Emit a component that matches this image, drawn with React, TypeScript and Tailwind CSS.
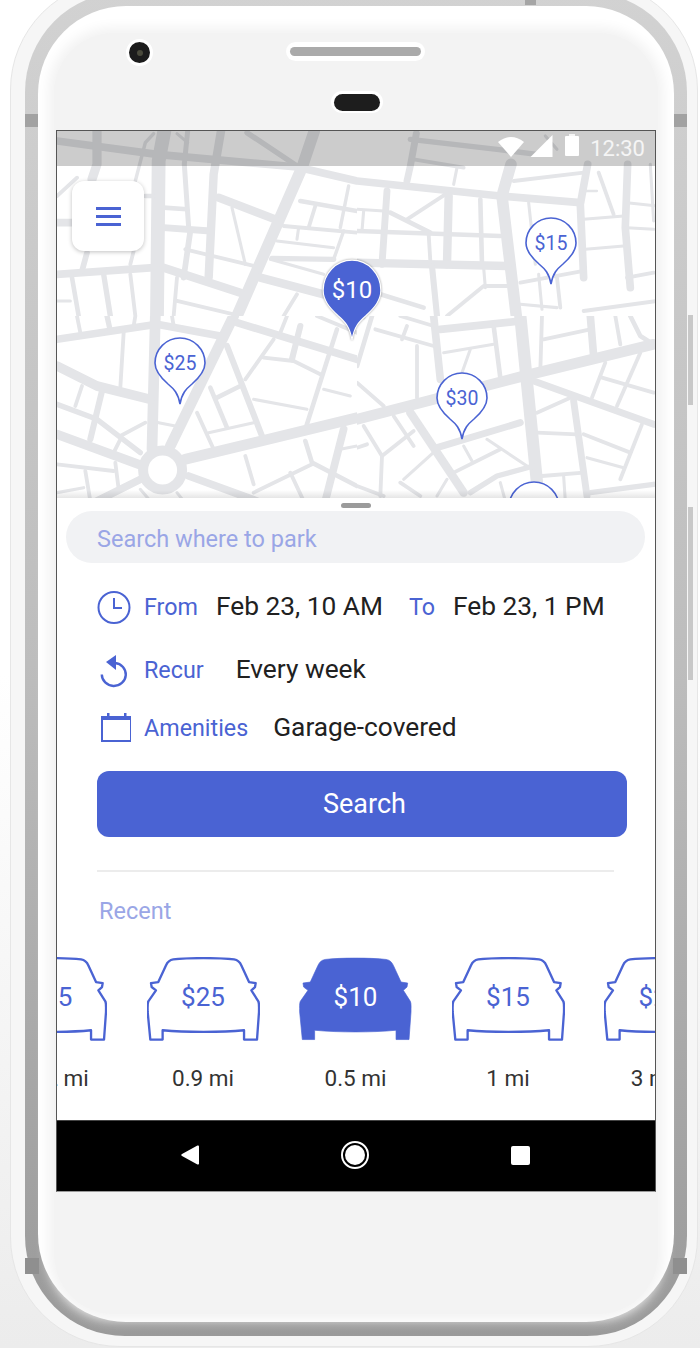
const BLUE = '#4a63d3'
const ROAD = '#e4e5e8'

// road traces, each group is drawn in its own crop of the map at 3x
type Road = [string, number]

const topLeft: Road[] = [
  ['0,30 300,70 720,108 900,150', 20], ['120,0 120,100 105,145', 24], ['322,0 305,90 300,555', 36],
  ['392,0 382,100 395,290', 13], ['492,0 470,130 455,440', 22], ['772,0 735,110 540,555', 30],
  ['570,5 720,105', 14], ['485,200 655,265', 22], ['525,230 565,400', 8], ['730,210 900,240', 12],
  ['775,225 755,290', 10], ['725,290 720,325', 8], ['680,285 900,305', 10], ['660,330 830,350', 8],
  ['645,382 830,385', 14], ['875,165 850,290', 9], ['860,300 830,385', 9], ['0,275 50,275', 20],
  ['320,230 390,235', 12], ['320,290 460,300', 18], ['400,300 380,440', 15], ['385,355 590,405', 10],
  ['320,410 550,485', 22], ['0,430 290,410', 20], ['90,365 75,420', 15], ['230,360 220,400', 10],
  ['45,440 65,555', 12], ['140,430 160,555', 14], ['220,430 235,555', 10], ['360,440 350,555', 10],
  ['360,510 530,550', 10], ['610,440 800,490', 22], ['640,385 800,430', 8], ['720,490 680,555', 10],
  ['0,195 60,140', 10], ['290,8 265,35 235,150', 9], ['265,195 290,195', 12], ['360,8 392,35', 8],
  ['0,510 40,510', 8],
]

const topRight: Road[] = [
  ['0,150 430,195 670,215', 20], ['160,25 420,55 540,70', 14], ['170,85 320,110', 10],
  ['470,150 680,125', 10], ['462,100 435,195 478,555', 30], ['178,8 160,105 150,150', 18],
  ['300,110 290,160', 8], ['90,180 75,400', 18], ['275,195 270,400', 22], ['370,205 375,400', 12],
  ['100,245 220,305', 12], ['150,265 265,190', 10], ['0,300 430,315', 12], ['0,235 80,240', 8],
  ['20,240 15,300', 8], ['215,310 220,390', 10], ['0,395 450,405', 22], ['225,405 240,555', 16],
  ['380,410 385,470', 8], ['270,555 380,465 450,465', 10], ['515,215 535,400', 8],
  ['692,100 670,220 680,440', 20], ['490,455 680,420', 10], ['600,440 610,530', 10],
  ['545,430 555,535', 8], ['680,265 800,255', 8], ['685,355 800,345', 8], ['725,125 770,250', 10],
  ['812,100 805,290 820,470', 20], ['810,215 900,225', 8], ['810,290 890,295', 8],
  ['810,440 890,425', 10], ['680,180 720,180', 6], ['680,540 900,510', 10], ['490,520 600,530', 8],
  ['70,490 200,530', 12], ['565,15 600,55', 8], ['880,100 890,270', 8],
]

const bottomLeft: Road[] = [
  ['295,0 285,400', 28], ['530,0 340,390', 28], ['0,70 200,40 300,25 490,60', 20],
  ['540,20 900,130', 20], ['0,150 120,210 280,250', 25], ['200,50 190,215', 10], ['75,210 55,270', 10],
  ['135,225 100,370', 16], ['0,265 120,310 250,410', 14], ['510,90 615,360', 16], ['460,215 510,335', 12],
  ['480,245 550,210', 12], ['650,70 565,190', 10], ['620,125 710,135 790,175', 10], ['730,30 705,130', 16],
  ['840,40 745,340', 12], ['590,250 750,280', 8], ['800,220 880,240', 8], ['455,350 590,320', 8],
  ['420,290 470,400', 10], ['385,430 900,305', 28], ['190,360 265,320', 10], ['305,320 355,330', 8],
  ['190,370 170,410', 10], ['0,355 245,445', 24], ['0,445 170,465', 10], ['85,465 100,555', 10],
  ['175,440 185,520', 10], ['0,530 80,515', 8], ['120,555 250,490', 20], ['395,480 600,555', 20],
  ['565,420 590,505', 10], ['745,375 765,440 900,510', 12], ['765,445 590,530', 10], ['700,470 740,555', 10],
  ['860,340 805,555', 20], ['850,400 900,390', 8], ['250,520 280,555', 8], ['360,530 380,555', 8],
  ['60,0 70,50', 10], ['150,0 160,45', 14], ['235,0 230,30', 10], ['345,0 350,30', 10], ['690,0 670,50', 10],
  ['780,0 900,50', 10],
]

const bottomRight: Road[] = [
  ['0,310 230,250 500,180 890,85', 28], ['490,0 540,500', 32], ['230,0 250,190', 20],
  ['250,40 490,15', 20], ['45,0 0,150', 12], ['55,40 230,90', 10], ['150,30 135,70', 10],
  ['180,90 180,245', 10], ['0,200 80,270', 10], ['410,30 430,185', 12], ['260,110 410,85', 8],
  ['340,100 315,170', 8], ['555,0 550,165', 10], ['560,70 700,40', 10], ['700,0 710,120', 20],
  ['775,0 790,85', 10], ['820,0 850,60 890,85', 12], ['530,195 890,325', 18], ['540,290 640,245', 10],
  ['650,255 690,540', 18], ['745,140 705,245', 10], ['850,110 780,270', 10], ['735,185 890,230', 10],
  ['680,355 820,410', 10], ['855,325 790,490', 10], ['690,425 800,455', 8], ['540,350 660,355', 10],
  ['555,480 680,470', 10], ['160,290 320,530', 22], ['110,300 170,390', 10], ['0,395 30,385', 10],
  ['20,330 75,420 70,540', 10], ['75,420 170,345', 10], ['240,395 490,320', 18], ['320,390 345,435', 8],
  ['290,470 430,400', 10], ['390,370 510,450', 8], ['140,490 240,400', 8], ['340,530 420,480 530,450', 14],
  ['0,510 80,540', 10], ['130,500 190,540', 10], ['620,480 625,555', 8], ['430,500 445,555', 8],
  ['700,530 890,505', 14], ['240,540 270,490', 8], ['0,0 20,5', 10], ['130,0 230,30', 10],
]

function RoadGroup({ id, x, y, roads }: { id: string; x: number; y: number; roads: Road[] }) {
  return (
    <g transform={`translate(${x} ${y}) scale(0.3333)`}>
      <clipPath id={id}>
        <rect x={0} y={0} width={900} height={555} />
      </clipPath>
      <g clipPath={`url(#${id})`} fill="none" stroke={ROAD} strokeLinejoin="round" strokeLinecap="round">
        {roads.map(([points, w], i) => (
          <polyline key={i} points={points} strokeWidth={w * 1.15} />
        ))}
      </g>
    </g>
  )
}

function MapRoads() {
  return (
    <svg className="block w-[598px] h-[367px]" viewBox="57 130 598 367">
      <RoadGroup id="tl" x={57} y={130} roads={topLeft} />
      <RoadGroup id="tr" x={357} y={130} roads={topRight} />
      <RoadGroup id="bl" x={57} y={315} roads={bottomLeft} />
      <RoadGroup id="br" x={357} y={315} roads={bottomRight} />
      {/* roundabout */}
      <circle cx={162.6} cy={469} r={19.5} fill="#fff" stroke={ROAD} strokeWidth={10} />
    </svg>
  )
}

const PIN_PATH =
  'M26 1A25 25 0 0 1 51 26C51 34 46 40 38 47C32 52 28 56 26 67C24 56 20 52 14 47C6 40 1 34 1 26A25 25 0 0 1 26 1Z'

function Pin({ price, left, top }: { price: string; left: string; top: string }) {
  return (
    <div className={`absolute ${left} ${top} w-[52px] h-[68px]`}>
      <svg className="block w-[52px] h-[68px]" viewBox="0 0 52 68">
        <path d={PIN_PATH} fill="#fff" stroke={BLUE} strokeWidth={1.6} />
      </svg>
      <div className="absolute left-0 top-0 w-[52px] h-[53px] flex items-center justify-center text-[19.5px] text-[#4a63d3]">
        {price}
      </div>
    </div>
  )
}

function StatusBar() {
  return (
    <div className="absolute left-0 top-0 w-full h-[35px] bg-black/20 flex items-center justify-end pr-[10px]">
      <svg className="w-[26px] h-[22px] mt-[-4px]" viewBox="0 0 26 22">
        <path d="M0 6Q13 -4 26 6L13 21Z" fill="#fff" />
      </svg>
      <svg className="ml-[6px] w-[23px] h-[23px] mt-[-5px]" viewBox="0 0 23 23">
        <path d="M0.5 22L22.5 0V22Z" fill="#fff" />
      </svg>
      <div className="ml-[12px] w-[14px] h-[20px] mt-[-5px] bg-white rounded-[1px] relative">
        <div className="absolute left-[4px] top-[-2px] w-[6px] h-[2px] bg-white/80" />
      </div>
      <span className="ml-[11px] text-[22px] text-white/80 leading-none">12:30</span>
    </div>
  )
}

function ClockIcon() {
  return (
    <svg className="block w-[34px] h-[33px]" viewBox="0 0 34 33">
      <circle cx={17} cy={16.5} r={15.5} fill="none" stroke={BLUE} strokeWidth={2} />
      <path d="M17 7V17H25" fill="none" stroke={BLUE} strokeWidth={2} />
    </svg>
  )
}

function ReplayIcon() {
  return (
    <svg className="block w-[34px] h-[36px]" viewBox="97 652 34 36">
      <path d="M115 663A12 11.5 0 1 1 101.8 674.5" fill="none" stroke={BLUE} strokeWidth={2.4} />
      <path d="M116 655V670L106 662Z" fill={BLUE} />
    </svg>
  )
}

function CalendarIcon() {
  return (
    <svg className="block w-[34px] h-[32px]" viewBox="97 710 34 32">
      <rect x={102} y={716} width={29} height={23} fill="none" stroke={BLUE} strokeWidth={2} />
      <rect x={101} y={714} width={31} height={4} fill={BLUE} />
      <rect x={107} y={711} width={2.5} height={4} fill={BLUE} />
      <rect x={124} y={711} width={2.5} height={4} fill={BLUE} />
    </svg>
  )
}

const CAR_PATH =
  'M228 53C262 53 295 54 320 57C332 59 338 66 342 75L365 125L385 128L383 140L372 150L393 183C396 190 395 200 395 215L389 298H350V270C310 274 270 275 228 275C186 275 146 274 105 270V298H68L60 215C60 200 59 190 62 183L85 150L72 140L70 128L92 125L115 75C119 66 125 59 137 57C162 54 194 53 228 53Z'

function Car({ price, dist, active, labelClass }: { price: string; dist: string; active?: boolean; labelClass?: string }) {
  return (
    <div className="w-[113px] shrink-0 flex flex-col items-center">
      <div className="relative w-[113px] h-[84px]">
        <svg className="block w-[113px] h-[84px]" viewBox="58 50 340 252">
          <path
            d={CAR_PATH}
            fill={active ? BLUE : '#fff'}
            stroke={BLUE}
            strokeWidth={active ? 2 : 7}
            strokeLinejoin="round"
          />
        </svg>
        <div
          className={`absolute left-0 top-[9px] w-full h-[62px] flex items-center justify-center text-[26px] ${active ? 'text-white' : 'text-[#4a63d3]'}`}
        >
          {price}
        </div>
      </div>
      <div className={`mt-[23px] text-[22.5px] leading-[28px] text-[#333] whitespace-nowrap ${labelClass ?? ''}`}>{dist}</div>
    </div>
  )
}

function Phone() {
  return (
    <div className="ml-[10px] mt-[-20px] w-[688px] h-[1367px] rounded-[110px] bg-[#f6f6f6] border border-[#e6e6e6] pl-[14px] pr-[10px] pt-[11px] relative">
      {/* metal band */}
      <div className="relative w-[662px] h-[1344px] rounded-[100px] bg-gradient-to-b from-[#d2d2d2] via-[#bdbdbd] to-[#9a9a9a] pl-[13px] pt-[14px]">
        <div className="absolute left-0 top-[122px] w-[13px] h-[13px] bg-[#a2a2a2]" />
        <div className="absolute right-0 top-[122px] w-[13px] h-[13px] bg-[#a2a2a2]" />
        <div className="absolute left-0 top-[1266px] w-[14px] h-[16px] bg-[#8f8f8f]" />
        <div className="absolute right-0 top-[1266px] w-[14px] h-[16px] bg-[#8f8f8f]" />
        {/* white front */}
        <div className="w-[636px] h-[1316px] rounded-[88px] bg-white pl-[16px] pt-[27px]">
          {/* soft grey face */}
          <div className="w-[604px] h-[1281px] rounded-[60px] bg-[#f3f3f3] shadow-[0_0_12px_6px_#f3f3f3] px-[2px]">
            <div className="h-[97px] relative">
              <div className="flex items-center pt-[4px]">
                <div className="ml-[70px] mt-[2px] w-[27px] h-[27px] rounded-full bg-[#1c1c1c] border-[3px] border-white flex items-center justify-center">
                  <div className="w-[6px] h-[6px] rounded-full bg-[#4a4a3c]" />
                </div>
                <div className="ml-[133px] w-[139px] h-[19px] rounded-full bg-white flex items-center justify-center">
                  <div className="w-[131px] h-[9px] rounded-full bg-[#aaaaaa]" />
                </div>
              </div>
              <div className="mx-auto mt-[25px] w-[52px] h-[22px] rounded-full bg-white flex items-center justify-center ml-[275px]">
                <div className="w-[46px] h-[17px] rounded-full bg-[#1d1d1d]" />
              </div>
            </div>
            <Screen />
          </div>
        </div>
      </div>
    </div>
  )
}

function Screen() {
  return (
    <div className="w-[600px] h-[1062px] border border-[#555] border-b-[#999] overflow-hidden flex flex-col">
      <div className="relative h-[367px] bg-white shrink-0 overflow-hidden">
        <MapRoads />
        <StatusBar />
        <div className="absolute left-[15px] top-[50px] w-[72px] h-[70px] rounded-[12px] bg-white shadow-[0_1px_4px_rgba(0,0,0,0.25)] flex flex-col items-center justify-center gap-[5px]">
          <div className="w-[25px] h-[3px] bg-[#4a63d3]" />
          <div className="w-[25px] h-[3px] bg-[#4a63d3]" />
          <div className="w-[25px] h-[3px] bg-[#4a63d3]" />
        </div>
        <Pin price="$15" left="left-[468px]" top="top-[86px]" />
        <Pin price="$25" left="left-[97px]" top="top-[206px]" />
        <Pin price="$30" left="left-[379px]" top="top-[241px]" />
        <Pin price="" left="left-[451px]" top="top-[350px]" />
        <div className="absolute left-[265px] top-[128px] w-[60px] h-[82px]">
          <svg
            className="block w-[60px] h-[82px] drop-shadow-[0_0_1px_rgba(0,0,0,0.4)]"
            viewBox="0 0 52 68"
            preserveAspectRatio="none"
          >
            <path d={PIN_PATH} fill={BLUE} stroke="#fff" strokeWidth={1} />
          </svg>
          <div className="absolute left-0 top-0 w-[60px] h-[62px] flex items-center justify-center text-[24px] text-white">
            $10
          </div>
        </div>
        <div className="absolute left-0 bottom-0 w-full h-[8px] bg-gradient-to-b from-transparent to-black/10" />
      </div>

      <div className="flex-1 bg-white flex flex-col">
        <div className="mx-auto mt-[5px] w-[30px] h-[5px] rounded-full bg-[#9b9b9b]" />
        <div className="ml-[9px] mt-[3px] w-[579px] h-[52px] rounded-full bg-[#f1f2f4] flex items-center pl-[31px] pt-[6px] text-[23.5px] text-[#9aa6e6]">
          Search where to park
        </div>

        <div className="mt-[28px] pl-[40px] h-[32px] flex items-center text-[26.3px] text-[#212121] whitespace-nowrap">
          <div className="w-[47px] shrink-0">
            <ClockIcon />
          </div>
          <span className="text-[23.3px] text-[#4a63d3]">From</span>
          <span className="ml-[18px]">Feb 23, 10 AM</span>
          <span className="ml-[26px] text-[23.3px] text-[#4a63d3]">To</span>
          <span className="ml-[18px]">Feb 23, 1 PM</span>
        </div>
        <div className="mt-[31px] pl-[40px] h-[32px] flex items-center text-[26.3px] text-[#212121] whitespace-nowrap">
          <div className="w-[47px] shrink-0">
            <ReplayIcon />
          </div>
          <span className="text-[23.3px] text-[#4a63d3]">Recur</span>
          <span className="ml-[32px]">Every week</span>
        </div>
        <div className="mt-[26px] pl-[40px] h-[32px] flex items-center text-[26.3px] text-[#212121] whitespace-nowrap">
          <div className="w-[47px] shrink-0">
            <CalendarIcon />
          </div>
          <span className="text-[23.3px] text-[#4a63d3]">Amenities</span>
          <span className="ml-[25px]">Garage-covered</span>
        </div>

        <div className="ml-[40px] mt-[27px] w-[530px] h-[66px] rounded-[12px] bg-[#4a63d3] flex items-center justify-center pl-[5px] text-[27px] text-white">
          Search
        </div>
        <div className="ml-[40px] mt-[33px] w-[517px] h-[2px] bg-[#ececec]" />
        <div className="ml-[42px] mt-[25px] text-[23.5px] leading-[28px] text-[#9aa6e6]">Recent</div>

        <div className="mt-[32px] ml-[-63px] flex gap-[39.5px]">
          <Car price="$35" dist="2 mi" labelClass="ml-[33px]" />
          <Car price="$25" dist="0.9 mi" />
          <Car price="$10" dist="0.5 mi" active />
          <Car price="$15" dist="1 mi" />
          <Car price="$20" dist="3 mi" labelClass="mr-[16px]" />
        </div>
      </div>

      <div className="h-[71px] shrink-0 bg-black border-t border-[#444] flex items-center pb-[2px]">
        <svg className="ml-[124px] w-[19px] h-[20px]" viewBox="0 0 19 20">
          <path d="M18 1.5V18.5C18 19.5 17 20 16 19.2L1 11C0 10.4 0 9.6 1 9L16 0.8C17 0 18 0.5 18 1.5Z" fill="#fff" />
        </svg>
        <div className="ml-[141px] w-[28px] h-[28px] rounded-full border-2 border-white flex items-center justify-center">
          <div className="w-[20px] h-[20px] rounded-full bg-white" />
        </div>
        <div className="ml-[142px] w-[19px] h-[19px] rounded-[2px] bg-white" />
      </div>
    </div>
  )
}

export default function App() {
  return (
    <div className="relative w-[700px] h-[1348px] overflow-hidden bg-gradient-to-b from-white via-white to-[#ececec] font-['Roboto',sans-serif]">
      <Phone />
      <div className="absolute left-[525px] top-0 w-[11px] h-[5px] bg-[#a5a5a5]" />
      <div className="absolute left-[688px] top-[315px] w-[5px] h-[90px] bg-[#c8c8c8]" />
      <div className="absolute left-[688px] top-[507px] w-[5px] h-[173px] bg-[#c8c8c8]" />
    </div>
  )
}
